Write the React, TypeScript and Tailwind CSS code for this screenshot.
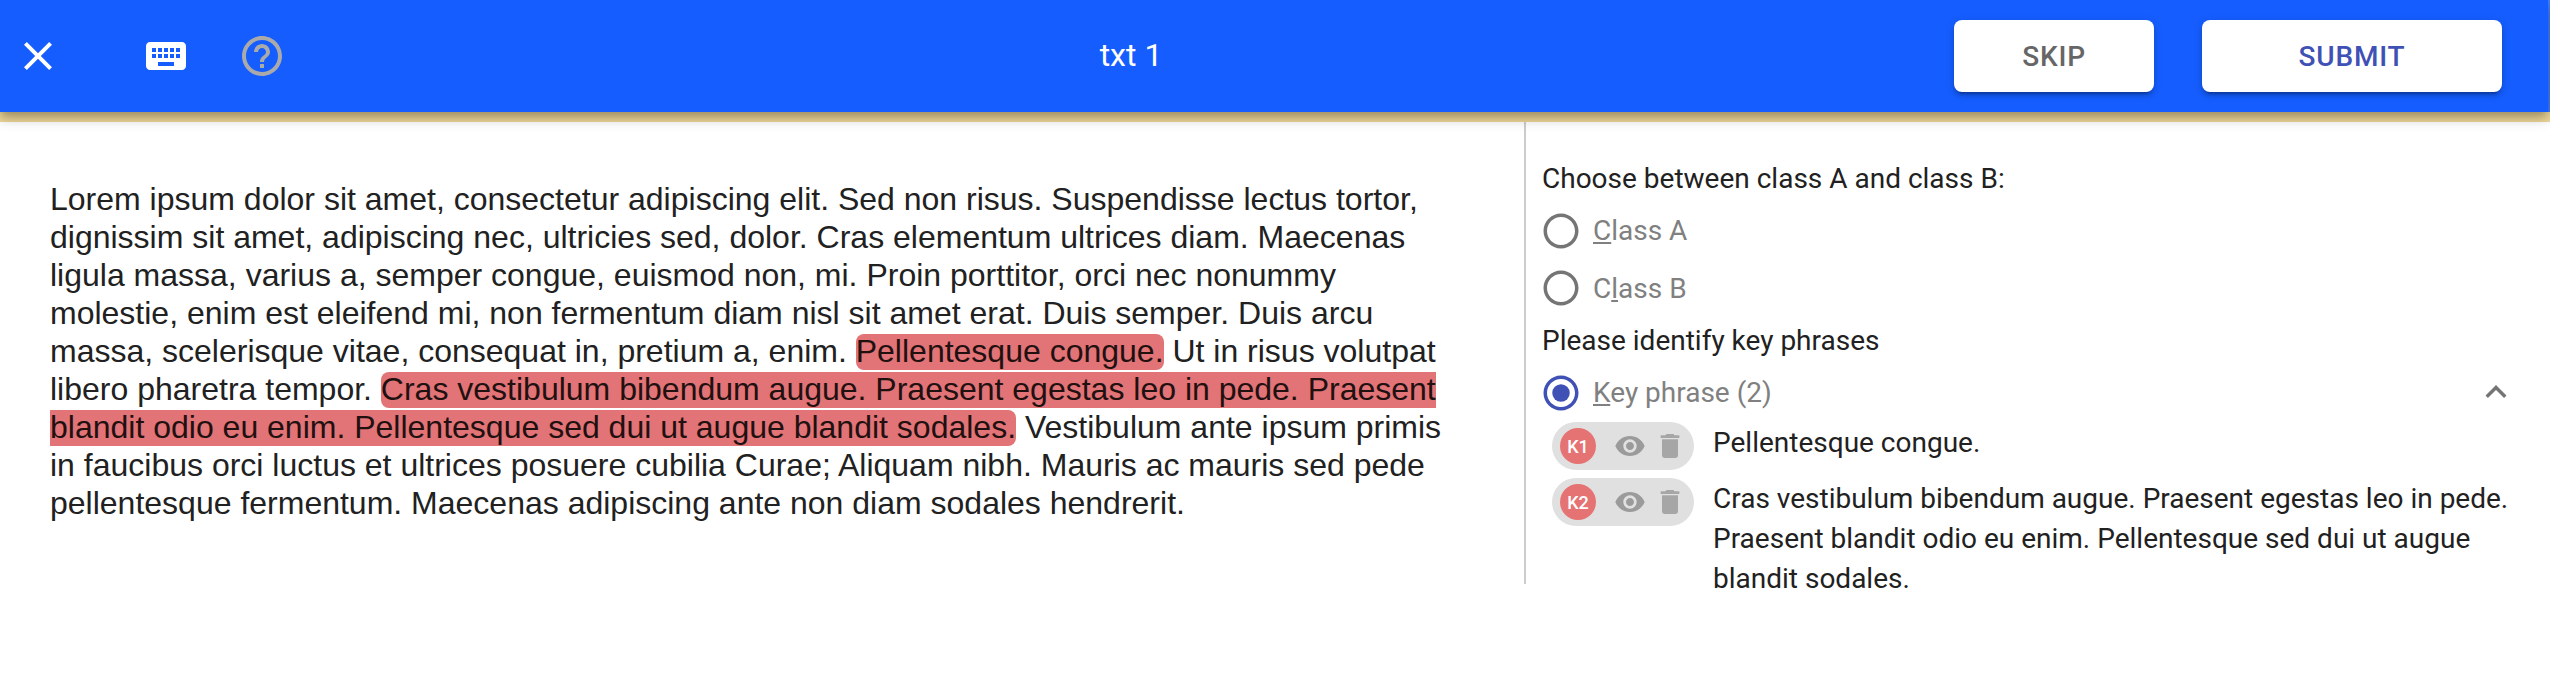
import React from "react";
import { MdClose, MdKeyboard, MdHelpOutline, MdVisibility, MdDelete, MdKeyboardArrowUp } from "react-icons/md";

function Line({ children }: { children: React.ReactNode }) {
  return <span className="block h-[38px] whitespace-pre">{children}</span>;
}

function Mark({ className = "", children }: { className?: string; children: React.ReactNode }) {
  return <mark className={"inline-block h-9 bg-[#e27376] leading-[34px] text-[#211010] " + className}>{children}</mark>;
}

function Radio({ checked = false }: { checked?: boolean }) {
  return (
    <svg viewBox="0 0 24 24" className={checked ? "-ml-px size-[42px] fill-[#3f51b5]" : "-ml-px size-[42px] fill-[#757575]"}>
      <path d="M12 2C6.48 2 2 6.48 2 12s4.48 10 10 10 10-4.48 10-10S17.52 2 12 2zm0 18c-4.42 0-8-3.58-8-8s3.58-8 8-8 8 3.58 8 8-3.58 8-8 8z" />
      {checked && <circle cx="12" cy="12" r="5" />}
    </svg>
  );
}

function Chip({ label }: { label: string }) {
  return (
    <div className="flex h-12 w-[142px] shrink-0 items-center rounded-full bg-[#e0e0e0] pl-2">
      <span className="flex size-9 items-center justify-center rounded-full bg-[#e57373] text-[18px] font-medium text-white">{label}</span>
      <MdVisibility className="ml-[18px] size-8 text-[#9b9b9b]" />
      <MdDelete className="ml-2 size-8 text-[#a6a6a6]" />
    </div>
  );
}

export default function App() {
  return (
    <div className="h-[676px] w-[2550px] overflow-hidden bg-white font-['Roboto',sans-serif] text-[#212121]">
      <div className="flex h-28 bg-[#447dfe]">
        <header className="relative z-10 flex h-28 w-[2548px] items-center bg-[#155dfe] shadow-[0_4px_8px_-2px_rgba(0,0,0,0.2),0_8px_10px_rgba(0,0,0,0.14),0_2px_20px_rgba(0,0,0,0.12)]">
          <div className="flex w-[1031px] items-center pl-[14px] text-white">
            <MdClose className="size-12" />
            <MdKeyboard className="ml-20 size-12" />
            <MdHelpOutline className="ml-12 size-12 text-[#aaaaaa]" />
          </div>
          <h1 className="w-[200px] pb-0.5 text-center text-[32px] leading-10 font-normal text-white">txt 1</h1>
          <div className="ml-auto flex gap-12 pr-[46px] text-[28px] font-medium tracking-[0.8px]">
            <button className="h-[72px] w-[200px] rounded-lg bg-white pt-px text-[#666666] shadow-[0_6px_2px_-4px_rgba(0,0,0,0.2),0_4px_4px_rgba(0,0,0,0.14),0_2px_10px_rgba(0,0,0,0.12)]">SKIP</button>
            <button className="h-[72px] w-[300px] rounded-lg bg-white pt-px text-[#3f51b5] shadow-[0_6px_2px_-4px_rgba(0,0,0,0.2),0_4px_4px_rgba(0,0,0,0.14),0_2px_10px_rgba(0,0,0,0.12)]">SUBMIT</button>
          </div>
        </header>
      </div>
      <div className="h-2.5 bg-[#efd899]" />
      <main className="flex">
        <p className="h-[462px] w-[1524px] pt-[58px] pl-[50px] font-['Liberation_Sans',sans-serif] text-[32px] leading-[38px]">
          <Line>Lorem ipsum dolor sit amet, consectetur adipiscing elit. Sed non risus. Suspendisse lectus tortor,</Line>
          <Line>dignissim sit amet, adipiscing nec, ultricies sed, dolor. Cras elementum ultrices diam. Maecenas</Line>
          <Line>ligula massa, varius a, semper congue, euismod non, mi. Proin porttitor, orci nec nonummy</Line>
          <Line>molestie, enim est eleifend mi, non fermentum diam nisl sit amet erat. Duis semper. Duis arcu</Line>
          <Line>massa, scelerisque vitae, consequat in, pretium a, enim. <Mark className="rounded-lg">Pellentesque congue.</Mark> Ut in risus volutpat</Line>
          <Line>libero pharetra tempor. <Mark className="rounded-l-lg">Cras vestibulum bibendum augue. Praesent egestas leo in pede. Praesent</Mark></Line>
          <Line><Mark className="rounded-r-lg">blandit odio eu enim. Pellentesque sed dui ut augue blandit sodales.</Mark> Vestibulum ante ipsum primis</Line>
          <Line>in faucibus orci luctus et ultrices posuere cubilia Curae; Aliquam nibh. Mauris ac mauris sed pede</Line>
          <Line>pellentesque fermentum. Maecenas adipiscing ante non diam sodales hendrerit.</Line>
        </p>
        <aside className="h-[462px] w-[1026px] border-l-2 border-[#cccccc] pl-[15px] text-[28px]">
          <h2 className="mt-9 ml-px leading-[41px]">Choose between class A and class B:</h2>
          <div className="mt-[11px] flex h-[42px] text-[#808080]">
            <Radio />
            <span className="ml-[11px] leading-[41px]"><u>C</u>lass A</span>
          </div>
          <div className="mt-[15px] flex h-[42px] text-[#808080]">
            <Radio />
            <span className="mt-px ml-[11px] leading-[41px]">C<u>l</u>ass B</span>
          </div>
          <h2 className="mt-[11px] ml-px leading-[41px]">Please identify key phrases</h2>
          <div className="mt-[11px] flex h-[42px] text-[#808080]">
            <Radio checked />
            <span className="ml-[11px] leading-[41px]"><u>K</u>ey phrase (2)</span>
            <MdKeyboardArrowUp className="-mt-px mr-[33px] ml-auto size-[42px] text-[#757575]" />
          </div>
          <div className="mt-2 ml-[11px] flex">
            <Chip label="K1" />
            <p className="mt-px ml-[19px] leading-10">Pellentesque congue.</p>
          </div>
          <div className="mt-2 ml-[11px] flex items-start">
            <Chip label="K2" />
            <p className="mt-px ml-[19px] leading-10 whitespace-nowrap">
              Cras vestibulum bibendum augue. Praesent egestas leo in pede.<br />
              Praesent blandit odio eu enim. Pellentesque sed dui ut augue<br />
              blandit sodales.
            </p>
          </div>
        </aside>
      </main>
    </div>
  );
}
